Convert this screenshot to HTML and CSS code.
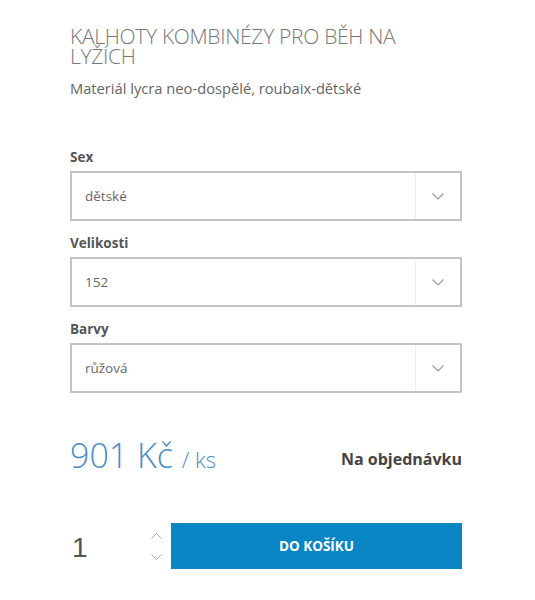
FILE: index.html
```html
<!DOCTYPE html>
<html lang="cs">
<head>
  <meta charset="UTF-8">
  <meta name="viewport" content="width=device-width, initial-scale=1.0">
  <title>Kalhoty kombinézy pro běh na lyžích</title>
  <link rel="stylesheet" href="styles.css">
</head>
<body>
  <div class="product">
    <h1 class="product-title">KALHOTY KOMBINÉZY PRO BĚH NA LYŽÍCH</h1>
    <p class="product-desc">Materiál lycra neo-dospělé, roubaix-dětské</p>

    <form class="variants">
      <div class="field">
        <label>Sex</label>
        <div class="select">
          <span class="select-value">dětské</span>
          <span class="select-arrow">
            <svg width="12" height="7" viewBox="0 0 12 7"><path d="M0.5 0.5l5.5 5.5 5.5-5.5" fill="none" stroke="#9a9a9a" stroke-width="1.2"/></svg>
          </span>
        </div>
      </div>
      <div class="field">
        <label>Velikosti</label>
        <div class="select">
          <span class="select-value">152</span>
          <span class="select-arrow">
            <svg width="12" height="7" viewBox="0 0 12 7"><path d="M0.5 0.5l5.5 5.5 5.5-5.5" fill="none" stroke="#9a9a9a" stroke-width="1.2"/></svg>
          </span>
        </div>
      </div>
      <div class="field">
        <label>Barvy</label>
        <div class="select">
          <span class="select-value">růžová</span>
          <span class="select-arrow">
            <svg width="12" height="7" viewBox="0 0 12 7"><path d="M0.5 0.5l5.5 5.5 5.5-5.5" fill="none" stroke="#9a9a9a" stroke-width="1.2"/></svg>
          </span>
        </div>
      </div>
    </form>

    <div class="price-row">
      <div class="price">901 Kč <span class="unit">/ ks</span></div>
      <div class="stock">Na objednávku</div>
    </div>

    <div class="buy-row">
      <div class="qty">
        <span class="qty-value">1</span>
        <span class="qty-arrows">
          <svg width="11" height="6" viewBox="0 0 11 6"><path d="M0.5 5.5l5-5 5 5" fill="none" stroke="#aaa" stroke-width="1"/></svg>
          <svg width="11" height="6" viewBox="0 0 11 6"><path d="M0.5 0.5l5 5 5-5" fill="none" stroke="#aaa" stroke-width="1"/></svg>
        </span>
      </div>
      <button type="button" class="buy-btn">DO KOŠÍKU</button>
    </div>
  </div>
</body>
</html>
```

FILE: styles.css
```css
body {
  margin: 0;
  padding: 0;
  background: #fff;
  font-family: "Open Sans", sans-serif;
  color: #555;
}

.product {
  width: 392px;
  padding: 26px 0 0 70px;
}

.product-title {
  margin: 0;
  font-size: 21px;
  font-weight: 300;
  line-height: 20px;
  color: #777;
  letter-spacing: -0.3px;
}

.product-desc {
  margin: 12px 0 0;
  font-size: 14.7px;
  color: #666;
}

.variants {
  margin-top: 50px;
}

.field {
  margin-bottom: 13px;
}

.field label {
  display: block;
  font-size: 13.5px;
  font-weight: 700;
  color: #555;
  margin-bottom: 5px;
}

.select {
  display: flex;
  height: 46px;
  border: 2px solid #c4c4c4;
  background: #fff;
}

.select-value {
  flex: 1;
  display: flex;
  align-items: center;
  padding-left: 13px;
  font-size: 13.5px;
  color: #666;
}

.select-arrow {
  width: 44px;
  display: flex;
  align-items: center;
  justify-content: center;
  border-left: 1px solid #eee;
}

.price-row {
  display: flex;
  justify-content: space-between;
  align-items: baseline;
  margin-top: 39px;
}

.price {
  font-size: 34px;
  font-weight: 300;
  color: #4a8fc1;
}

.price .unit {
  font-size: 22px;
}

.stock {
  position: relative;
  top: -3px;
  font-size: 16px;
  font-weight: 700;
  color: #444;
}

.buy-row {
  display: flex;
  align-items: center;
  margin-top: 45px;
}

.qty {
  width: 101px;
  display: flex;
  align-items: center;
  justify-content: space-between;
}

.qty-value {
  margin-top: 4px;
  padding-left: 2px;
  font-family: "Liberation Sans", Arial, sans-serif;
  font-size: 28px;
  color: #555;
}

.qty-arrows {
  display: flex;
  flex-direction: column;
  gap: 15px;
  margin-right: 9px;
}

.buy-btn {
  flex: 1;
  height: 46px;
  border: none;
  background: #0a86c4;
  color: #fff;
  font-family: "Open Sans", sans-serif;
  font-size: 13.5px;
  font-weight: 700;
}
```
